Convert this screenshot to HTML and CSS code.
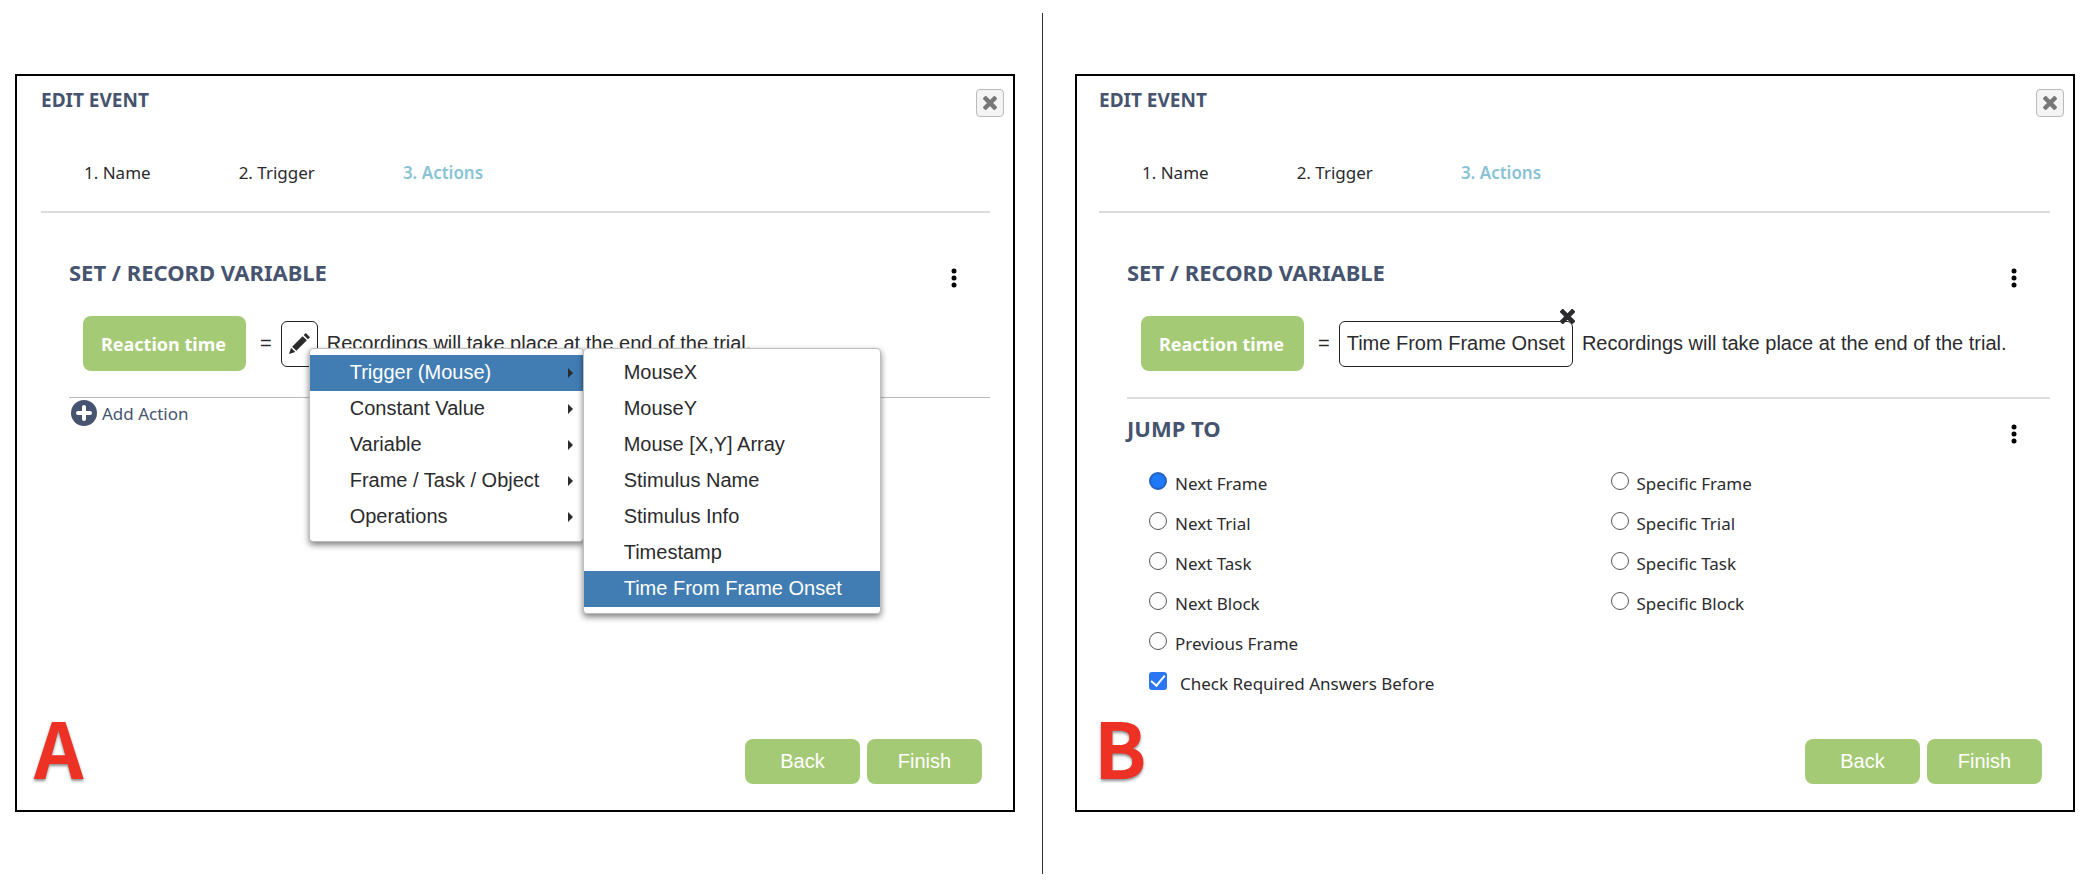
FILE: index.html
```html
<!DOCTYPE html>
<html lang="en">
<head>
  <meta charset="utf-8">
  <title>Edit Event</title>
  <link rel="stylesheet" href="styles.css">
</head>
<body>
  <svg class="sprite" aria-hidden="true">
    <symbol id="icon-close" viewBox="0 0 16 16">
      <path d="M3 3 L13 13 M13 3 L3 13" fill="none" stroke="currentColor" stroke-width="5" stroke-linecap="square"/>
    </symbol>
    <symbol id="icon-dots" viewBox="0 0 6 20">
      <circle cx="3" cy="3" r="2.5"/>
      <circle cx="3" cy="10" r="2.5"/>
      <circle cx="3" cy="17" r="2.5"/>
    </symbol>
  </svg>

  <main class="page">
    <section class="dialog dialog-a">
      <header class="dialog-header">
        <h1>EDIT EVENT</h1>
        <button type="button" class="close" aria-label="Close"><svg><use href="#icon-close"/></svg></button>
      </header>
      <nav class="steps">
        <a href="#name">1. Name</a>
        <a href="#trigger">2. Trigger</a>
        <a href="#actions" class="active">3. Actions</a>
      </nav>

      <div class="action">
        <div class="action-title">
          <h2>SET / RECORD VARIABLE</h2>
          <button type="button" class="dots" aria-label="Options"><svg><use href="#icon-dots"/></svg></button>
        </div>
        <div class="assign">
          <button type="button" class="variable">Reaction time</button>
          <span class="equals">=</span>
          <div class="value">
            <button type="button" class="value-box edit" aria-label="Edit value">
              <svg viewBox="0 0 20 20">
                <path d="M0 20 L2 14 L6 18 Z M3 13 L13 3 L17 7 L7 17 Z M14 2 L16 0 L20 4 L18 6 Z" fill="currentColor"/>
              </svg>
            </button>
            <ul class="menu">
              <li class="selected">
                <button type="button">Trigger (Mouse)<span class="arrow"></span></button>
                <ul class="menu submenu">
                  <li><button type="button">MouseX</button></li>
                  <li><button type="button">MouseY</button></li>
                  <li><button type="button">Mouse [X,Y] Array</button></li>
                  <li><button type="button">Stimulus Name</button></li>
                  <li><button type="button">Stimulus Info</button></li>
                  <li><button type="button">Timestamp</button></li>
                  <li class="selected"><button type="button">Time From Frame Onset</button></li>
                </ul>
              </li>
              <li><button type="button">Constant Value<span class="arrow"></span></button></li>
              <li><button type="button">Variable<span class="arrow"></span></button></li>
              <li><button type="button">Frame / Task / Object<span class="arrow"></span></button></li>
              <li><button type="button">Operations<span class="arrow"></span></button></li>
            </ul>
          </div>
          <span class="note">Recordings will take place at the end of the trial.</span>
        </div>
      </div>
      <button type="button" class="add-action">
        <svg viewBox="0 0 26 26">
          <circle cx="13" cy="13" r="13" fill="currentColor"/>
          <path d="M13 7 V19 M7 13 H19" stroke="#fff" stroke-width="4" stroke-linecap="round"/>
        </svg>
        Add Action
      </button>

      <footer class="dialog-footer">
        <span class="letter">A</span>
        <button type="button" class="btn">Back</button>
        <button type="button" class="btn">Finish</button>
      </footer>
    </section>

    <div class="divider"></div>

    <section class="dialog dialog-b">
      <header class="dialog-header">
        <h1>EDIT EVENT</h1>
        <button type="button" class="close" aria-label="Close"><svg><use href="#icon-close"/></svg></button>
      </header>
      <nav class="steps">
        <a href="#name">1. Name</a>
        <a href="#trigger">2. Trigger</a>
        <a href="#actions" class="active">3. Actions</a>
      </nav>

      <div class="action">
        <div class="action-title">
          <h2>SET / RECORD VARIABLE</h2>
          <button type="button" class="dots" aria-label="Options"><svg><use href="#icon-dots"/></svg></button>
        </div>
        <div class="assign">
          <button type="button" class="variable">Reaction time</button>
          <span class="equals">=</span>
          <div class="value">
            <button type="button" class="value-box">Time From Frame Onset</button>
            <button type="button" class="remove" aria-label="Remove value"><svg><use href="#icon-close"/></svg></button>
          </div>
          <span class="note">Recordings will take place at the end of the trial.</span>
        </div>
      </div>

      <div class="jump">
        <div class="action-title">
          <h2>JUMP TO</h2>
          <button type="button" class="dots" aria-label="Options"><svg><use href="#icon-dots"/></svg></button>
        </div>
        <div class="options">
          <div class="column">
            <label><input type="radio" name="jump" checked>Next Frame</label>
            <label><input type="radio" name="jump">Next Trial</label>
            <label><input type="radio" name="jump">Next Task</label>
            <label><input type="radio" name="jump">Next Block</label>
            <label><input type="radio" name="jump">Previous Frame</label>
            <label><input type="checkbox" checked>Check Required Answers Before</label>
          </div>
          <div class="column">
            <label><input type="radio" name="jump">Specific Frame</label>
            <label><input type="radio" name="jump">Specific Trial</label>
            <label><input type="radio" name="jump">Specific Task</label>
            <label><input type="radio" name="jump">Specific Block</label>
          </div>
        </div>
      </div>

      <footer class="dialog-footer">
        <span class="letter">B</span>
        <button type="button" class="btn">Back</button>
        <button type="button" class="btn">Finish</button>
      </footer>
    </section>
  </main>
</body>
</html>
```
FILE: styles.css
```css
* {
  box-sizing: border-box;
}

body {
  margin: 0;
  background: #fff;
  color: #2b2b2e;
  font-family: "Noto Sans", "Open Sans", sans-serif;
  font-size: 18px;
}

button {
  margin: 0;
  padding: 0;
  border: 0;
  background: none;
  color: inherit;
  font: inherit;
  cursor: pointer;
}

h1, h2 {
  margin: 0;
  color: #46546f;
  font-weight: bold;
}

.sprite {
  display: none;
}

.page {
  display: flex;
  min-height: 100vh;
  padding: 13px 17px 16px 15px;
}

.divider {
  width: 1px;
  margin: 0 32px 0 27px;
  background: #333;
}

/* Dialog */
.dialog {
  --side: 24px;
  flex: 1;
  min-width: 0;
  display: flex;
  flex-direction: column;
  margin: 61px 0 62px;
  border: 2px solid #000;
}

.dialog-b {
  --side: 22px;
}

.dialog-header {
  display: flex;
  justify-content: space-between;
  align-items: flex-start;
  padding: 13px 9px 0 var(--side);
}

.dialog-header h1 {
  font-size: 19px;
  line-height: 22px;
}

.close {
  display: flex;
  align-items: center;
  justify-content: center;
  width: 28px;
  height: 28px;
  border: 1px solid #bbb;
  border-radius: 4px;
  background: #f4f4f4;
  color: #777;
}

.close svg {
  width: 14px;
  height: 14px;
}

.steps {
  display: flex;
  gap: 88px;
  margin: 44px 23px 0 var(--side);
  padding: 0 43px 26px;
  border-bottom: 2px solid #dcdcdc;
  font-size: 17px;
  line-height: 24px;
}

.steps a {
  color: #2b2b2e;
  text-decoration: none;
}

.steps .active {
  color: #88c3d5;
  font-weight: 600;
}

/* Set / record variable */
.action, .jump {
  margin: 0 23px 0 calc(var(--side) + 28px);
}

.action {
  padding: 45px 0 26px;
  border-bottom: 1px solid #bbb;
}

.dialog-b .action {
  border-bottom: 2px solid #dcdcdc;
}

.action-title {
  display: flex;
  justify-content: space-between;
  align-items: flex-start;
}

.action-title h2 {
  font-size: 22px;
  line-height: 28px;
}

.dots {
  display: flex;
  align-items: center;
  justify-content: center;
  width: 24px;
  height: 40px;
  margin-right: 24px;
}

.dots svg {
  width: 6px;
  height: 20px;
  fill: #000;
}

.assign {
  display: flex;
  align-items: center;
  gap: 9px;
  margin: 18px 0 0 14px;
  font-family: "Liberation Sans", Arial, sans-serif;
  font-size: 20px;
  white-space: nowrap;
}

.variable {
  min-width: 163px;
  height: 55px;
  padding: 0 18px;
  border-radius: 8px;
  background: #a5ca75;
  color: #fff;
  font-family: "Noto Sans", "Open Sans", sans-serif;
  font-size: 18px;
  font-weight: bold;
  text-align: left;
}

.equals {
  margin-left: 5px;
}

.value {
  position: relative;
}

.value-box {
  display: flex;
  align-items: center;
  height: 46px;
  padding: 0 7px;
  border: 1px solid #222;
  border-radius: 6px;
  background: #fff;
}

.edit svg {
  width: 21px;
  height: 21px;
}

.remove {
  position: absolute;
  top: -12px;
  right: -2px;
  display: flex;
}

.remove svg {
  width: 15px;
  height: 15px;
}

/* Context menu */
.menu {
  position: absolute;
  top: 27px;
  left: 28px;
  z-index: 1;
  width: 275px;
  margin: 0;
  padding: 6px 0;
  border: 1px solid #bebebe;
  border-radius: 4px;
  background: #fff;
  box-shadow: 0 3px 6px rgba(0, 0, 0, 0.5);
  color: #2b2b2e;
  list-style: none;
}

.submenu {
  top: -7px;
  left: 100%;
  width: 298px;
}

.menu li {
  position: relative;
}

.menu button {
  display: flex;
  align-items: center;
  justify-content: space-between;
  width: 100%;
  height: 36px;
  padding: 0 10px 0 40px;
}

.menu .selected > button {
  background: #417db3;
  color: #fff;
}

.arrow {
  border: 5px solid transparent;
  border-right: 0;
  border-left-color: #2b2b2e;
}

.add-action {
  display: flex;
  align-items: center;
  align-self: flex-start;
  gap: 5px;
  margin: 2px 0 0 calc(var(--side) + 30px);
  color: #46546f;
  font-size: 17px;
}

.add-action svg {
  width: 26px;
  height: 26px;
}

/* Jump to */
.jump {
  padding-top: 15px;
}

.options {
  display: flex;
  margin-top: 9px;
}

.column {
  flex: 1;
  padding-left: 22px;
}

.options label {
  display: flex;
  align-items: center;
  height: 40px;
  font-size: 17px;
}

.options input {
  appearance: none;
  width: 18px;
  height: 18px;
  margin: 0 8px 5px 0;
  border: 1px solid #555;
  background: #fff;
}

.options input[type="radio"] {
  border-radius: 50%;
}

.options input[type="radio"]:checked {
  border: 2px solid #2462c0;
  background: #1f78f5;
}

.options input[type="checkbox"] {
  display: grid;
  place-items: center;
  margin-right: 13px;
  border: 0;
  border-radius: 3px;
  background: #2a76f3;
}

.options input[type="checkbox"]:checked::before {
  content: "";
  width: 6px;
  height: 12px;
  margin-bottom: 3px;
  border: solid #fff;
  border-width: 0 2px 2px 0;
  transform: rotate(40deg);
}

/* Footer */
.dialog-footer {
  display: flex;
  align-items: flex-end;
  gap: 7px;
  margin-top: auto;
  padding: 0 31px 26px 17px;
}

.letter {
  margin-right: auto;
  color: #ed3124;
  font-family: "Noto Sans CJK SC", sans-serif;
  font-size: 77px;
  font-weight: bold;
  line-height: 76px;
  text-shadow: 0 2px 3px rgba(0, 0, 0, 0.45);
}

.btn {
  width: 115px;
  height: 45px;
  border-radius: 8px;
  background: #a5ca75;
  color: #fff;
  font-family: "Liberation Sans", Arial, sans-serif;
  font-size: 20px;
}
```
